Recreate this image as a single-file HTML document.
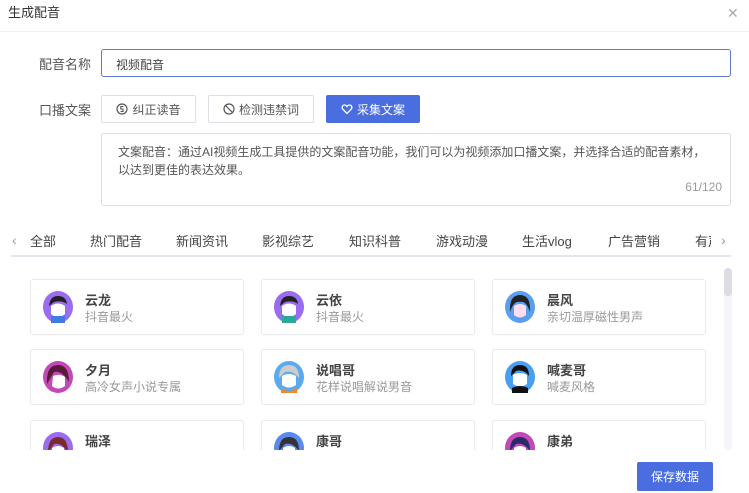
<!DOCTYPE html>
<html><head><meta charset="utf-8"><style>
*{margin:0;padding:0;box-sizing:border-box}
body{width:749px;height:493px;overflow:hidden;background:#fff;font-family:"Liberation Sans","Noto Sans CJK SC",sans-serif;color:#333;position:relative}
.abs{position:absolute}
.title{left:8px;top:2px;font-size:13px;color:#333}
.close{left:727px;top:5px;font-size:14px;color:#aaa}
.hline{left:0;top:31px;width:749px;height:1px;background:#eef0f5}
.lbl{font-size:13px;color:#555;width:90px;text-align:right}
.input{left:101px;top:49px;width:630px;height:28px;border:1px solid #5b7bd5;border-radius:3px;font-size:12px;padding:6px 14px;color:#444}
.btn{top:95px;height:28px;border:1px solid #dcdfe6;border-radius:2px;font-size:12px;color:#555;display:flex;align-items:center;justify-content:center;gap:4px}
.btn.pri{background:#4a6ee0;border-color:#4a6ee0;color:#fff}
.ta{left:101px;top:133px;width:630px;height:73px;border:1px solid #dcdfe6;border-radius:3px;font-size:12px;line-height:18px;padding:9px 16px;color:#555}
.cnt{right:27px;top:180px;font-size:12px;color:#999}
.tab{top:231px;font-size:13px;color:#444}
.tabline{left:11px;top:255px;width:720px;height:2px;background:#e4e7ed}
.card{width:214px;height:56px;border:1px solid #e9ebef;border-radius:3px;background:#fff;box-shadow:0 0 2px rgba(0,0,0,.04)}
.card .n{position:absolute;left:54px;top:10px;font-size:13px;font-weight:bold;color:#444}
.card .s{position:absolute;left:54px;top:28px;font-size:12px;color:#999}
.card svg{position:absolute;left:11px;top:10px}
.clip{left:0;top:268px;width:749px;height:182px;overflow:hidden}
.save{left:637px;top:462px;width:76px;height:29px;background:#4a6ee0;color:#fff;font-size:12px;border-radius:2px;display:flex;align-items:center;justify-content:center}
</style></head><body>
<div class="abs title">生成配音</div>
<div class="abs close">✕</div>
<div class="abs hline"></div>
<div class="abs lbl" style="left:1px;top:54px">配音名称</div>
<div class="abs input">视频配音</div>
<div class="abs lbl" style="left:1px;top:100px">口播文案</div>
<div class="abs btn" style="left:101px;width:95px"><svg width="12" height="12" viewBox="0 0 12 12"><circle cx="6" cy="6" r="5" fill="none" stroke="#555" stroke-width="1.2"/><path d="M7.5 3.5H4.8V6H7V8.5H4.5" fill="none" stroke="#555" stroke-width="1.1"/></svg>纠正读音</div>
<div class="abs btn" style="left:208px;width:106px"><svg width="12" height="12" viewBox="0 0 12 12"><circle cx="6" cy="6" r="5" fill="none" stroke="#555" stroke-width="1.2"/><path d="M2.5 2.5L9.5 9.5" stroke="#555" stroke-width="1.2"/></svg>检测违禁词</div>
<div class="abs btn pri" style="left:326px;width:94px"><svg width="12" height="12" viewBox="0 0 12 12"><path d="M6 10.5L1.8 6.2C0.5 4.8 1.2 2 3.6 2 4.8 2 5.5 2.8 6 3.5 6.5 2.8 7.2 2 8.4 2 10.8 2 11.5 4.8 10.2 6.2Z" fill="none" stroke="#fff" stroke-width="1.3"/></svg>采集文案</div>
<div class="abs ta">文案配音：通过AI视频生成工具提供的文案配音功能，我们可以为视频添加口播文案，并选择合适的配音素材，以达到更佳的表达效果。</div>
<div class="abs cnt">61/120</div>
<div class="abs" style="left:12px;top:232px;font-size:14px;color:#999">‹</div>
<div class="abs tab" style="left:30px">全部</div>
<div class="abs tab" style="left:90px">热门配音</div>
<div class="abs tab" style="left:176px">新闻资讯</div>
<div class="abs tab" style="left:262px">影视综艺</div>
<div class="abs tab" style="left:349px">知识科普</div>
<div class="abs tab" style="left:436px">游戏动漫</div>
<div class="abs tab" style="left:522px">生活vlog</div>
<div class="abs tab" style="left:608px">广告营销</div>
<div class="abs tab" style="left:695px;width:16px;overflow:hidden;white-space:nowrap">有声书</div>
<div class="abs" style="left:721px;top:232px;font-size:14px;color:#999">›</div>
<div class="abs tabline"></div>
<div class="abs clip">
<div class="abs" style="left:724px;top:0;width:8px;height:182px;background:#f4f5fa;border-radius:4px"></div>
<div class="abs" style="left:724px;top:0;width:8px;height:28px;background:#dcdde3;border-radius:4px"></div>
<div class="abs card" style="left:30px;top:11px"><svg width="32" height="34"><ellipse cx="16" cy="17" rx="15" ry="16" fill="#9a6cf0"/><path d="M7 16Q8 6 16 6 24 6 25 14 20 10 12 12Z" fill="#222"/><path d="M9 16Q16 11 23 16V24Q16 30 9 24Z" fill="#fff"/><rect x="9" y="26" width="14" height="7" fill="#3f7be0"/></svg><div class="n">云龙</div><div class="s">抖音最火</div></div>
<div class="abs card" style="left:261px;top:11px"><svg width="32" height="34"><ellipse cx="16" cy="17" rx="15" ry="16" fill="#9a6cf0"/><path d="M7 16Q8 6 16 6 24 6 25 14 20 10 12 12Z" fill="#222"/><path d="M9 16Q16 11 23 16V24Q16 30 9 24Z" fill="#fff"/><rect x="9" y="26" width="14" height="7" fill="#2aa89a"/></svg><div class="n">云依</div><div class="s">抖音最火</div></div>
<div class="abs card" style="left:492px;top:11px"><svg width="32" height="34"><ellipse cx="16" cy="17" rx="15" ry="16" fill="#5a9ef0"/><path d="M6 22Q5 5 16 5 27 5 26 22 22 10 16 12 10 10 6 22Z" fill="#222"/><path d="M10 16Q16 12 22 16V25Q16 30 10 25Z" fill="#fde"/></svg><div class="n">晨风</div><div class="s">亲切温厚磁性男声</div></div>
<div class="abs card" style="left:30px;top:81px"><svg width="32" height="34"><ellipse cx="16" cy="17" rx="15" ry="16" fill="#c24ab8"/><path d="M5 24Q4 5 16 5 27 5 27 22 20 10 12 12Z" fill="#5a1a3a"/><path d="M11 16Q17 13 23 17V26Q16 31 10 26Z" fill="#fff"/></svg><div class="n">夕月</div><div class="s">高冷女声小说专属</div></div>
<div class="abs card" style="left:261px;top:81px"><svg width="32" height="34"><ellipse cx="16" cy="17" rx="15" ry="16" fill="#5aaaf0"/><path d="M6 18Q6 5 16 5 26 5 26 18 20 10 12 12Z" fill="#ccc"/><path d="M9 16Q16 12 23 16V25Q16 30 9 25Z" fill="#fff"/><path d="M8 28L16 32 24 28 24 33H8Z" fill="#f08a2a"/></svg><div class="n">说唱哥</div><div class="s">花样说唱解说男音</div></div>
<div class="abs card" style="left:492px;top:81px"><svg width="32" height="34"><ellipse cx="16" cy="17" rx="15" ry="16" fill="#4aa0f0"/><path d="M7 16Q7 5 16 5 25 5 25 16 20 9 12 11Z" fill="#111"/><path d="M9 15Q16 11 23 15V24Q16 29 9 24Z" fill="#fff"/><path d="M8 28Q16 24 24 28V33H8Z" fill="#111"/></svg><div class="n">喊麦哥</div><div class="s">喊麦风格</div></div>
<div class="abs card" style="left:30px;top:152px"><svg width="32" height="34"><ellipse cx="16" cy="17" rx="15" ry="16" fill="#9a6cf0"/><path d="M6 22Q6 6 16 6 26 6 26 22 20 11 12 13Z" fill="#7a2a2a"/><path d="M10 17Q16 13 22 17V26Q16 30 10 26Z" fill="#fff"/></svg><div class="n">瑞泽</div></div>
<div class="abs card" style="left:261px;top:152px"><svg width="32" height="34"><ellipse cx="16" cy="17" rx="15" ry="16" fill="#5a8af0"/><path d="M6 20Q6 6 16 6 26 6 26 20 20 11 12 13Z" fill="#333"/><path d="M10 17Q16 13 22 17V26Q16 30 10 26Z" fill="#fff"/></svg><div class="n">康哥</div></div>
<div class="abs card" style="left:492px;top:152px"><svg width="32" height="34"><ellipse cx="16" cy="17" rx="15" ry="16" fill="#c24ab8"/><path d="M6 20Q6 6 16 6 26 6 26 20 20 11 12 13Z" fill="#2a2a6a"/><path d="M10 17Q16 13 22 17V26Q16 30 10 26Z" fill="#fff"/></svg><div class="n">康弟</div></div>
</div>
<div class="abs save">保存数据</div>
</body></html>
